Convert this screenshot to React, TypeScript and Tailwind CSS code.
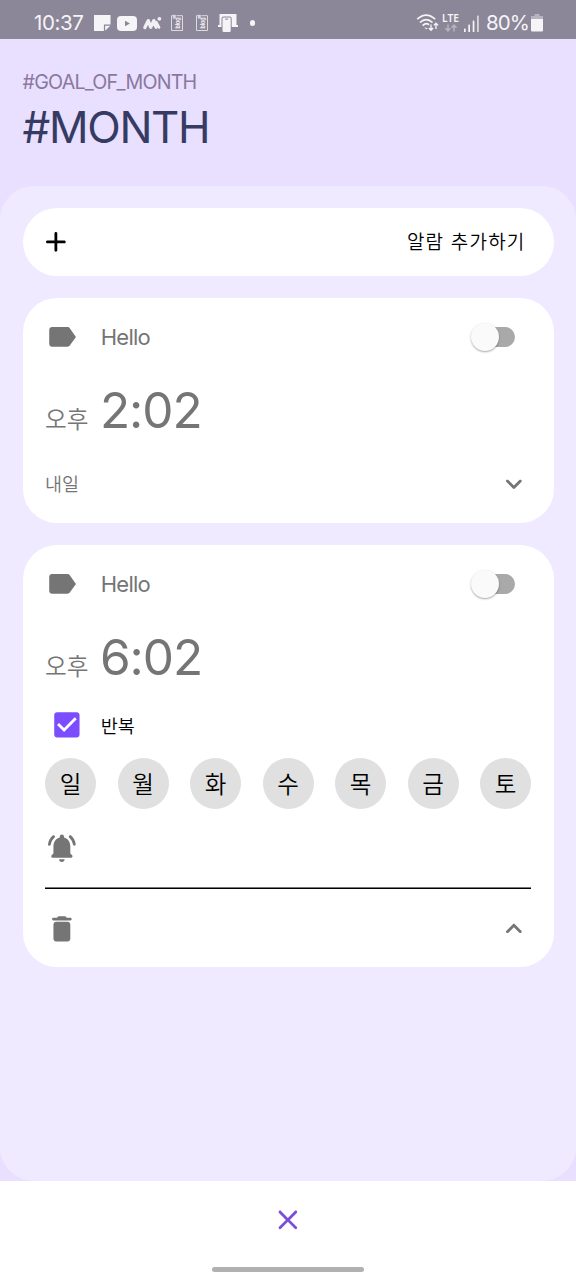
import type { ReactNode } from "react";

const LABEL =
  "M17.63 5.84C17.27 5.33 16.67 5 16 5L5 5.01C3.9 5.01 3 5.9 3 7v10c0 1.1.9 1.99 2 1.99L16 19c.67 0 1.27-.33 1.63-.84L22 12l-4.37-6.16z";
const BELL =
  "M18 16v-5c0-3.07-1.64-5.64-4.5-6.32V4c0-.83-.67-1.5-1.5-1.5s-1.5.67-1.5 1.5v.68C7.63 5.36 6 7.92 6 11v5l-1.29 1.29c-.63.63-.19 1.71.7 1.71h13.17c.89 0 1.34-1.08.71-1.71L18 16zm-6.01 6c1.1 0 2-.9 2-2h-4c0 1.1.89 2 2 2zM6.77 4.73c.42-.38.43-1.03.03-1.43-.38-.38-1-.39-1.39-.02C3.7 4.84 2.52 6.96 2.14 9.34c-.09.61.38 1.16 1 1.16.48 0 .9-.35.98-.83.3-1.94 1.26-3.67 2.65-4.94zM18.6 3.28c-.4-.37-1.02-.36-1.4.02-.4.4-.38 1.04.03 1.42 1.38 1.27 2.35 3 2.65 4.94.07.48.49.83.98.83.61 0 1.09-.55.99-1.16-.38-2.37-1.55-4.48-3.25-6.05z";
const TRASH =
  "M6 19c0 1.1.9 2 2 2h8c1.1 0 2-.9 2-2V9c0-1.1-.9-2-2-2H8c-1.1 0-2 .9-2 2v10zM18 4h-2.5l-.71-.71c-.18-.18-.44-.29-.7-.29H9.91c-.26 0-.52.11-.7.29L8.5 4H6c-.55 0-1 .45-1 1s.45 1 1 1h12c.55 0 1-.45 1-1s-.45-1-1-1z";
const DOWN =
  "M15.88 9.29L12 13.17 8.12 9.29c-.39-.39-1.02-.39-1.41 0-.39.39-.39 1.02 0 1.41l4.59 4.59c.39.39 1.02.39 1.41 0l4.59-4.59c.39-.39.39-1.02 0-1.41-.39-.38-1.03-.39-1.42 0z";
const ADD =
  "M18 13h-5v5c0 .55-.45 1-1 1s-1-.45-1-1v-5H6c-.55 0-1-.45-1-1s.45-1 1-1h5V6c0-.55.45-1 1-1s1 .45 1 1v5h5c.55 0 1 .45 1 1s-.45 1-1 1z";
const CLOSE =
  "M18.3 5.71c-.39-.39-1.02-.39-1.41 0L12 10.59 7.11 5.7c-.39-.39-1.02-.39-1.41 0-.39.39-.39 1.02 0 1.41L10.59 12 5.7 16.89c-.39.39-.39 1.02 0 1.41.39.39 1.02.39 1.41 0L12 13.41l4.89 4.89c.39.39 1.02.39 1.41 0 .39-.39.39-1.02 0-1.41L13.41 12l4.89-4.89c.38-.38.38-1.02 0-1.4z";
const CHECKBOX =
  "M19 3H5c-1.11 0-2 .9-2 2v14c0 1.1.89 2 2 2h14c1.11 0 2-.9 2-2V5c0-1.1-.89-2-2-2zm-9 14l-5-5 1.41-1.41L10 14.17l7.59-7.59L19 8l-9 9z";

const DAYS = ["일", "월", "화", "수", "목", "금", "토"];

function Icon({ d, className = "" }: { d: string; className?: string }) {
  return (
    <svg viewBox="0 0 24 24" className={`h-[33.75px] w-[33.75px] shrink-0 fill-current ${className}`}>
      <path d={d} />
    </svg>
  );
}

function BlogIcon() {
  return (
    <svg viewBox="0 0 14 18" className="h-[18px] w-[14px]" fill="none" stroke="#dddbe2" strokeWidth="1">
      <path d="M3 1.7H1.5v14.8h11V1.7H6.5" />
      <path d="M3.2 1v4l1.2-1.1L5.6 5V1z" fill="#dddbe2" strokeWidth="0.4" />
      <text
        transform="translate(8 14.6) rotate(-90)"
        fill="#f4f3f6"
        stroke="none"
        fontSize="5.6"
        fontWeight="700"
        dy="1.8"
        fontFamily="Inter, sans-serif"
        textLength="11"
        lengthAdjust="spacingAndGlyphs"
      >
        blog
      </text>
    </svg>
  );
}

function StatusBar() {
  return (
    <div className="flex h-[39px] shrink-0 items-center justify-between bg-[#8b8698] pt-[7px] pr-[33px] pl-[34px] text-[#f5f4f7]">
      <div className="flex items-center">
        <span className="w-[52px] text-[20.5px] leading-[24px] tracking-[-0.4px]">10:37</span>
        <svg viewBox="0 0 18 18" className="ml-[8px] h-[18px] w-[17px] fill-current">
          <path d="M0 .5h17.5v10H10.5v7H0z" />
          <path d="M11.8 17.2v-5.4h5.4z" />
        </svg>
        <svg viewBox="0 0 20 15" className="ml-[6px] h-[15px] w-[20px]">
          <rect width="20" height="15" rx="4" fill="#f5f4f7" />
          <path d="M8 4.8v5.4l5-2.7z" fill="#8b8698" />
        </svg>
        <svg viewBox="0 0 19 14" className="ml-[6px] h-[14px] w-[19px]" fill="none" stroke="#f0eff3" strokeLinecap="round">
          <path d="M1.9 11.5L5.2 4.6l2.5 6.6 3.1-6.6 2.3 6.6" strokeWidth="3.3" strokeLinejoin="round" />
          <path d="M13.2 6.2l2.8 5.2" strokeWidth="2.8" />
          <circle cx="16.4" cy="2.8" r="1.9" fill="#f0eff3" stroke="none" />
        </svg>
        <div className="ml-[8px] flex gap-[11px]">
          <BlogIcon />
          <BlogIcon />
        </div>
        <svg viewBox="0 0 20 18" className="ml-[8.5px] h-[18px] w-[20px]" fill="#f5f4f7">
          <path d="M1.5 0h17v11h1.5v2H0v-2h1.5z" />
          <path d="M3.5 17.5V4.5Q3.5 2.4 5.6 2.4h6Q13.7 2.4 13.7 4.5v9h-1.5v4z" fill="#8b8698" />
          <rect x="4.5" y="3.4" width="8.2" height="14.6" rx="1.2" />
          <path d="M7 4.6h3.2v1H7z" fill="#8b8698" />
        </svg>
        <span className="ml-[12px] size-[5.5px] rounded-full bg-[#f5f4f7]" />
      </div>
      <div className="flex items-center">
        <svg viewBox="0 0 24 18" className="h-[18px] w-[24px]" fill="none" stroke="#f5f4f7" strokeWidth="1.7">
          <path d="M1.2 5.2Q10.2-3 19.2 5.2M3.9 8.5Q10.2 2.6 16.5 8.5M6.6 11.6Q10.2 8.3 13 10.8" />
          <path d="M8.4 13.5l1.8 2 1.5-1.6z" fill="#f5f4f7" stroke="none" />
          <path d="M15 10.5v5.6M12.8 14l2.2 2.3 2.1-2.3M20 15V9.2M17.9 11.4L20 9.1l2.1 2.3" strokeWidth="1.3" />
        </svg>
        <div className="ml-[2px] flex w-[17px] flex-col items-center">
          <span className="font-['Noto_Sans',sans-serif] text-[10.2px] leading-[9px] font-semibold">LTE</span>
          <svg viewBox="0 0 14 8" className="mt-[1px] h-[8px] w-[14px]" fill="none" stroke="#b7b3bf" strokeWidth="1.5">
            <path d="M4 .5v6M1.5 4.2L4 6.8l2.5-2.6M10 7.5v-6M7.5 3.8L10 1.2l2.5 2.6" />
          </svg>
        </div>
        <svg viewBox="0 0 16 17" className="ml-[5px] h-[17px] w-[16px]" fill="#f5f4f7">
          <rect x="0" y="13.5" width="1.7" height="3.5" rx=".6" />
          <rect x="4.3" y="9.5" width="1.7" height="7.5" rx=".6" />
          <rect x="8.7" y="5.5" width="1.7" height="11.5" rx=".6" />
          <rect x="13" y="0.5" width="1.8" height="16.5" rx=".6" fill="#d9d7de" />
        </svg>
        <span className="ml-[6px] w-[45px] text-[20.5px] leading-[24px] tracking-[-0.9px]">80%</span>
        <svg viewBox="0 0 12 18" className="h-[18px] w-[12px]">
          <path d="M3.5 0h5v2H12v3H0V2h3.5z" fill="#b7b3bf" />
          <path d="M0 5h12v11.5q0 1-1 1H1q-1 0-1-1z" fill="#f5f4f7" />
        </svg>
      </div>
    </div>
  );
}

function Switch() {
  return (
    <span className="flex h-[28px] w-[44px] items-center rounded-full">
      <span className="z-10 size-[28px] rounded-full bg-[#fafafa] shadow-[0_1px_2px_rgba(0,0,0,0.35)]" />
      <span className="-ml-[14px] h-[20px] w-[30px] rounded-r-full bg-[#a9a9a9]" />
    </span>
  );
}

function AlarmCard({ time, children }: { time: string; children: ReactNode }) {
  return (
    <section className="rounded-[34px] bg-white px-[22.5px] text-[#757575]">
      <div className="flex h-[77.5px] items-center">
        <Icon d={LABEL} className="-ml-[0.5px]" />
        <span className="ml-[22.5px] flex-1 text-[22px] leading-[28px] tracking-[-0.75px]">Hello</span>
        <span className="mr-[16px]">
          <Switch />
        </span>
      </div>
      <div className="flex h-[68.5px] items-baseline">
        <span className="w-[55px] text-[23.6px] font-[350]">오후</span>
        <span className="text-[49.5px] leading-[69px] tracking-[-1.1px]">{time}</span>
      </div>
      {children}
    </section>
  );
}

export default function App() {
  return (
    <div className="flex h-[1280px] w-[576px] flex-col overflow-hidden bg-[#e9e0ff] font-['Inter','Noto_Sans_CJK_KR',sans-serif]">
      <StatusBar />
      <header className="h-[146.5px] shrink-0 px-[22.5px] pt-[30px]">
        <p className="text-[19.7px] leading-[26px] tracking-[-0.8px] text-[#8a789e]">#GOAL_OF_MONTH</p>
        <h1 className="mt-[4px] text-[43.8px] leading-[57px] tracking-[-1.3px] text-[#363b64]">#MONTH</h1>
      </header>
      <main className="flex h-[995.5px] shrink-0 flex-col rounded-[34px] bg-[#efeaff] px-[22.5px] pt-[22.5px]">
        <button className="flex h-[67.5px] shrink-0 items-center justify-between rounded-full bg-white pr-[28px] pl-[16.5px] text-black">
          <Icon d={ADD} />
          <span className="pt-[3px] text-[19px] leading-[28px] font-[350] tracking-[1.2px]">알람 추가하기</span>
        </button>
        <div className="mt-[22.5px] flex flex-col gap-[22.5px]">
          <AlarmCard time="2:02">
            <div className="flex h-[78.5px] items-center justify-between pt-[2px]">
              <span className="pt-[2px] text-[18.5px] font-[350]">내일</span>
              <Icon d={DOWN} />
            </div>
          </AlarmCard>
          <AlarmCard time="6:02">
            <div className="flex h-[67px] items-center pl-[5px]">
              <Icon d={CHECKBOX} className="text-[#7c4dff]" />
              <span className="ml-[17px] pt-[4px] text-[18.5px] font-[350] text-black">반복</span>
            </div>
            <div className="flex justify-between">
              {DAYS.map((day) => (
                <span
                  key={day}
                  className="flex size-[51px] items-center justify-center rounded-full bg-[#e0e0e0] pt-[3px] text-[23.5px] font-[350] text-black"
                >
                  {day}
                </span>
              ))}
            </div>
            <div className="flex h-[78px] items-center">
              <Icon d={BELL} className="-ml-[0.5px]" />
            </div>
            <div className="h-[2px] border-t border-b border-t-[#777777] border-b-black bg-black" />
            <div className="flex h-[78px] items-center justify-between pt-[2px]">
              <Icon d={TRASH} className="-ml-[0.5px]" />
              <Icon d={DOWN} className="rotate-180" />
            </div>
          </AlarmCard>
        </div>
      </main>
      <footer className="flex flex-1 flex-col items-center justify-between bg-white pt-[22px] pb-[8px]">
        <Icon d={CLOSE} className="text-[#7a4fd6]" />
        <span className="h-[5px] w-[152px] rounded-full bg-[#b0b0b0]" />
      </footer>
    </div>
  );
}
